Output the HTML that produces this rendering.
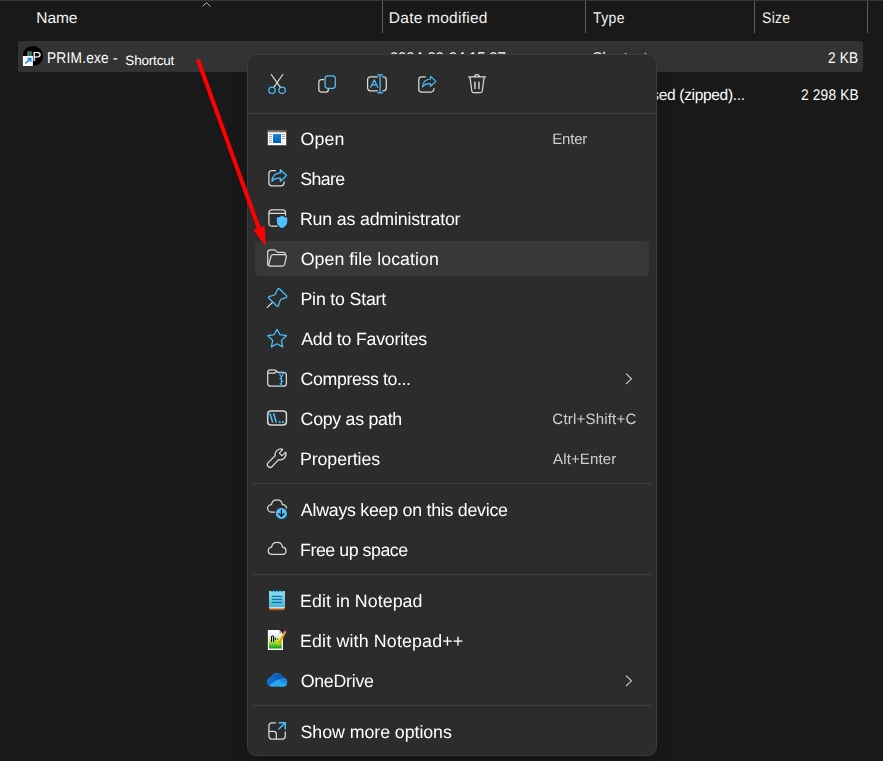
<!DOCTYPE html>
<html lang="en">
<head>
<meta charset="utf-8">
<title>Context menu</title>
<style>
html,body{margin:0;padding:0;}
body{width:883px;height:761px;overflow:hidden;background:#191919;position:relative;
  font-family:"Liberation Sans",sans-serif;color:#fff;text-rendering:geometricPrecision;}
.abs{position:absolute;}
.topline{left:0;top:0;width:883px;height:1px;background:#383838;}
.hdr{font-size:15.5px;line-height:18px;color:#f2f2f2;white-space:nowrap;}
.vsep{top:1px;width:1px;height:32px;background:#5e5e5e;}
.row1{left:18px;top:41px;width:845px;height:30.5px;background:#333333;border-radius:3px;}
.cell{font-size:15.5px;line-height:18px;color:#fff;white-space:nowrap;}
.s13{font-size:13.5px;}
.menu{left:247px;top:54px;width:408px;height:700px;background:#2c2c2c;border:1px solid #3c3c3c;border-radius:9px;
  box-shadow:0 12px 22px -2px rgba(0,0,0,.24);}
.msep{left:252px;width:399px;height:1px;background:#404040;}
.hl{left:255px;top:241px;width:394px;height:35px;background:#383838;border-radius:5px;}
.it{font-size:17.8px;line-height:20px;color:#fff;white-space:nowrap;}
.sc{font-size:15px;line-height:18px;color:#cfcfcf;white-space:nowrap;}
svg{position:absolute;overflow:visible;}
</style>
</head>
<body>
<div class="abs topline"></div>

<!-- header -->
<div class="abs vsep" style="left:382px"></div>
<div class="abs vsep" style="left:585px"></div>
<div class="abs vsep" style="left:754px"></div>
<div class="abs vsep" style="left:867px"></div>
<svg style="left:200px;top:0px" width="14" height="8" viewBox="0 0 14 8"><path d="M2.5 6.6 L6.5 2.6 L10.5 6.6" fill="none" stroke="#b4b4b4" stroke-width="1"/></svg>

<!-- rows -->
<div class="abs row1"></div>
<div class="abs hdr" style="left:36.31px;top:10.10px;letter-spacing:-0.089px">Name</div>
<div class="abs hdr" style="left:388.84px;top:10.10px;letter-spacing:0.244px">Date modified</div>
<div class="abs hdr" style="left:592.85px;top:10.10px;letter-spacing:0.462px;transform:scaleX(0.900);transform-origin:0 0">Type</div>
<div class="abs hdr" style="left:761.92px;top:10.10px;letter-spacing:0.361px;transform:scaleX(0.900);transform-origin:0 0">Size</div>
<div class="abs cell" style="left:47.48px;top:50.00px;letter-spacing:0.242px;transform:scaleX(0.885);transform-origin:0 0">PRIM.exe -</div>
<div class="abs cell s13" style="left:125.33px;top:51.70px;letter-spacing:-0.185px">Shortcut</div>
<div class="abs cell" style="left:389.63px;top:50.00px;letter-spacing:-0.406px">2024-09-24 15:27</div>
<div class="abs cell" style="left:592.29px;top:50.00px;letter-spacing:-0.367px">Shortcut</div>
<div class="abs cell" style="left:827.93px;top:50.00px;letter-spacing:0.142px;transform:scaleX(0.885);transform-origin:0 0">2 KB</div>
<div class="abs cell" style="left:590.74px;top:86.50px;letter-spacing:-0.325px">Compressed (zipped)...</div>
<div class="abs cell" style="left:800.61px;top:86.50px;letter-spacing:0.209px;transform:scaleX(0.885);transform-origin:0 0">2 298 KB</div>

<!-- file icon -->
<svg style="left:0;top:0" width="60" height="80" viewBox="0 0 60 80">
  <circle cx="32.9" cy="56" r="10.1" fill="#000"/>
  <rect x="27.2" y="51.2" width="1" height="4.8" fill="#50606c"/><rect x="28.2" y="51.2" width="1" height="4.8" fill="#7e9cb0"/><rect x="29.2" y="51.2" width="0.8" height="4.8" fill="#4a5660"/>
  <rect x="30" y="51.2" width="1" height="4.8" fill="#3f9a34"/><rect x="31" y="51.2" width="1" height="4.8" fill="#2a6a24"/>
  <text x="32.4" y="60.5" font-family="Liberation Sans, sans-serif" font-size="13" fill="#fff">P</text>
  <rect x="22.9" y="56" width="10" height="10" fill="#fbfcff"/>
  <path d="M25.4 63.5 L30.2 58.9 M27.4 58.5 H30.8 V61.8" fill="none" stroke="#1a86e0" stroke-width="1.5"/>
</svg>

<!-- menu -->
<div class="abs menu"></div>
<div class="abs msep" style="top:113px;left:248px;width:408px"></div>
<div class="abs msep" style="top:483px"></div>
<div class="abs msep" style="top:574px"></div>
<div class="abs msep" style="top:705px"></div>
<div class="abs hl"></div>
<div class="abs" style="left:0;top:0;width:883px;height:761px;will-change:transform">
<div class="abs it" style="left:300.60px;top:129.00px;letter-spacing:0.078px">Open</div>
<div class="abs it" style="left:300.37px;top:169.00px;letter-spacing:-0.688px">Share</div>
<div class="abs it" style="left:299.92px;top:209.00px;letter-spacing:-0.180px">Run as administrator</div>
<div class="abs it" style="left:300.70px;top:249.00px;letter-spacing:0.045px">Open file location</div>
<div class="abs it" style="left:300.46px;top:289.00px;letter-spacing:-0.194px">Pin to Start</div>
<div class="abs it" style="left:301.16px;top:328.70px;letter-spacing:-0.228px">Add to Favorites</div>
<div class="abs it" style="left:300.58px;top:368.70px;letter-spacing:-0.404px">Compress to...</div>
<div class="abs it" style="left:300.58px;top:408.60px;letter-spacing:-0.284px">Copy as path</div>
<div class="abs it" style="left:300.06px;top:448.60px;letter-spacing:-0.116px">Properties</div>
<div class="abs it" style="left:300.86px;top:499.70px;letter-spacing:-0.255px">Always keep on this device</div>
<div class="abs it" style="left:300.06px;top:540.00px;letter-spacing:-0.463px">Free up space</div>
<div class="abs it" style="left:300.06px;top:590.80px;letter-spacing:0.057px">Edit in Notepad</div>
<div class="abs it" style="left:300.06px;top:630.80px;letter-spacing:0.164px">Edit with Notepad++</div>
<div class="abs it" style="left:300.68px;top:670.80px;letter-spacing:-0.269px">OneDrive</div>
<div class="abs it" style="left:300.55px;top:721.60px;letter-spacing:-0.057px">Show more options</div>
<div class="abs sc" style="left:552.30px;top:131.00px;letter-spacing:-0.210px">Enter</div>
<div class="abs sc" style="left:552.35px;top:410.60px;letter-spacing:0.204px">Ctrl+Shift+C</div>
<div class="abs sc" style="left:553.07px;top:450.70px;letter-spacing:0.126px">Alt+Enter</div>
</div>




<!-- icons -->
<svg style="left:0;top:0" width="883" height="761" viewBox="0 0 883 761" fill="none" stroke-linecap="round" stroke-linejoin="round">
<defs>
  <linearGradient id="gnp" x1="0" y1="0" x2="0" y2="1"><stop offset="0" stop-color="#8fdcf6"/><stop offset="1" stop-color="#45b4da"/></linearGradient>
  <linearGradient id="gnpp" x1="0" y1="0" x2="0" y2="1"><stop offset="0" stop-color="#ffffff"/><stop offset=".3" stop-color="#dcecf4"/><stop offset=".5" stop-color="#d0f048"/><stop offset=".8" stop-color="#58c828"/><stop offset="1" stop-color="#109018"/></linearGradient>
  <linearGradient id="gop" x1="0" y1="0" x2="0" y2="1"><stop offset="0" stop-color="#1c86dc"/><stop offset="1" stop-color="#0060b8"/></linearGradient>
</defs>
<g stroke="#d9d9d9" stroke-width="1.25">
  <!-- cut -->
  <path d="M271.3 74.5 L280.2 87.2 M282.8 74.5 L274 87.2"/>
  <g stroke="#4cc2ff"><circle cx="272" cy="90.2" r="3.2"/><circle cx="282.1" cy="90.2" r="3.2"/></g>
  <!-- copy -->
  <path d="M324 79.5 H321.6 A2.8 2.8 0 0 0 318.8 82.3 V89.2 A2.8 2.8 0 0 0 321.6 92 H325.7 A2.8 2.8 0 0 0 328.5 89.4"/>
  <rect x="325.1" y="75.8" width="10.2" height="12.5" rx="2.8" stroke="#4cc2ff"/>
  <!-- rename -->
  <path d="M377.4 76.9 H370.6 A3 3 0 0 0 367.6 79.9 V87.8 A3 3 0 0 0 370.6 90.8 H377.4 M382.9 76.9 H383.3 A3 3 0 0 1 386.3 79.9 V87.8 A3 3 0 0 1 383.3 90.8 H382.9"/>
  <g stroke="#4cc2ff"><path d="M380.1 74.8 V92.9 M377.7 74.8 H382.5 M377.7 92.9 H382.5"/><path d="M370.7 87.3 L374.25 79.9 L377.8 87.3 M371.9 84.9 H376.6" stroke-width="1.25"/></g>
  <!-- share (top) -->
  <path d="M425.2 76.9 H421.6 A2.8 2.8 0 0 0 418.8 79.7 V89.2 A2.8 2.8 0 0 0 421.6 92 H431.1 A2.8 2.8 0 0 0 433.9 89.2 V88.5"/>
  <path d="M430.5 76.4 L435.9 81.4 L430.5 86.3 V83.7 C426.9 83.5 424.3 84.6 422.5 86.9 C422.9 82.2 425.9 79.3 430.5 79 Z" stroke="#4cc2ff" stroke-width="1.15"/>
  <!-- delete -->
  <path d="M468.6 76.9 H485.4 M474.6 76.7 A2.4 2.1 0 0 1 479.4 76.7 M470 77.3 L471.8 91 A2 2 0 0 0 473.8 92.7 H480.3 A2 2 0 0 0 482.3 91 L484.1 77.3"/>
  <path d="M474.95 82.1 V88.4 M478.95 82.1 V88.4" stroke-width="1.45"/>

  <!-- share (item) -->
  <path d="M275.5 170.6 H271.9 A3 3 0 0 0 268.9 173.6 V182.8 A3 3 0 0 0 271.9 185.8 H281.1 A3 3 0 0 0 284.1 182.8 V181.8"/>
  <path d="M280.3 169.7 L286.6 175.5 L280.3 181.3 V178.2 C276.5 178 273.8 179 271.9 181.4 C272.3 176.4 275.5 173.2 280.3 172.9 Z" stroke="#4cc2ff" stroke-width="1.25"/>
  <!-- run as admin -->
  <path d="M277 226.2 H271.9 A3 3 0 0 1 268.9 223.2 V212.8 A3 3 0 0 1 271.9 209.8 H282.5 A3 3 0 0 1 285.5 212.8 V215.2 M268.9 213.4 H285.5"/>
  <path d="M282 215.6 C283.4 216.9 285.2 217.5 287.3 217.7 V221.6 C287.3 224.8 285.2 227 282 228.2 C278.8 227 276.8 224.8 276.8 221.6 V217.7 C278.8 217.5 280.6 216.9 282 215.6 Z" fill="#4cc2ff" stroke="none"/>
  <!-- open file location -->
  <path d="M285.4 254.6 V254.2 A1.8 1.8 0 0 0 283.6 252.4 H277.6 L275.4 250.4 A2.2 2.2 0 0 0 274 249.8 H270.4 A2.7 2.7 0 0 0 267.7 252.5 V263.6 A2.6 2.6 0 0 0 270.3 266.2"/>
  <path d="M270.3 266.2 H282.2 A2.6 2.6 0 0 0 284.7 264.2 L286.3 256.8 A1.7 1.7 0 0 0 284.6 254.7 H273.2 A2.4 2.4 0 0 0 270.9 256.5 L268.6 265"/>
  <!-- pin -->
  <path d="M272.5 302.4 L267.3 307.4" stroke="#e4e4e4"/>
  <path d="M279.6 289 L286.4 295.6 A1.3 1.3 0 0 1 285.9 297.7 L281.4 299.2 A2 2 0 0 0 280.1 300.6 L278.4 305.9 A0.8 0.8 0 0 1 277.1 306.2 L268.7 298 A0.8 0.8 0 0 1 269 296.7 L274.2 295 A2 2 0 0 0 275.5 293.8 L277.4 289.4 A1.3 1.3 0 0 1 279.6 289 Z" stroke="#4cc2ff"/>
  <!-- star -->
  <path d="M277.05 329.3 L279.9 334.7 L286.4 335.7 L281.4 340.4 L282.7 346.9 L277.05 343.8 L271.4 346.9 L272.7 340.4 L267.7 335.7 L274.2 334.7 Z" stroke="#4cc2ff"/>
  <!-- compress -->
  <path d="M267.7 373.2 H273.6 A2.4 2.4 0 0 0 275.3 372.5 L276.8 371 M277.6 372.3 H283.4 A3 3 0 0 1 286.4 375.3 V383.2 A3 3 0 0 1 283.4 386.2 H270.7 A3 3 0 0 1 267.7 383.2 V372.6 A2.8 2.8 0 0 1 270.5 369.8 H273.9 A2.4 2.4 0 0 1 275.5 370.4 L277.6 372.3"/>
  <g stroke="#4cc2ff" stroke-width="1.1"><path d="M281.4 376.2 V386.4"/><ellipse cx="281.4" cy="374.2" rx="1.5" ry="2.1"/><path d="M281.4 378.5 H280.1 M281.4 381.2 H282.7 M281.4 383.8 H280.1" stroke-width="1.3"/></g>
  <!-- copy as path -->
  <rect x="267.7" y="411" width="18.7" height="13.9" rx="3.2" stroke-width="1.5"/>
  <path d="M269.9 413.2 L272.7 422.5 M273.5 413.2 L276.3 422.5" stroke="#4cc2ff" stroke-width="1.5" stroke-linecap="butt"/>
  <rect x="278.8" y="421.1" width="1.8" height="1.8" fill="#4cc2ff" stroke="none"/><rect x="282.1" y="421.1" width="1.8" height="1.8" fill="#4cc2ff" stroke="none"/>
  <!-- properties -->
  <path d="M282.7 449.3 L279.7 452.6 A0.7 0.7 0 0 0 279.7 453.5 L281.6 455.4 A0.7 0.7 0 0 0 282.5 455.4 L285.7 452.2 A5.8 5.8 0 0 1 278.6 459.6 L272.1 466.5 A2.75 2.75 0 0 1 268.2 462.6 L275.1 455.7 A5.8 5.8 0 0 1 282.7 449.3 Z"/>
  <!-- always keep -->
  <path d="M274.6 512.1 H271.2 A3.7 3.7 0 0 1 271.5 504.7 A5.5 5.5 0 0 1 282.4 504.7 A3.7 3.7 0 0 1 286.6 508"/>
  <circle cx="281.4" cy="513.4" r="5.5" fill="#4cc2ff" stroke="none"/>
  <path d="M281.4 510.4 V516.2 M278.8 513.7 L281.4 516.3 L284 513.7" stroke="#000" stroke-width="1.2"/>
  <!-- free up -->
  <path d="M271.2 554.4 H283.1 A3.7 3.7 0 0 0 282.5 547.1 A5.5 5.5 0 0 0 271.6 547.1 A3.7 3.7 0 0 0 271.2 554.4 Z"/>
  <!-- show more options -->
  <path d="M275.5 722.8 H271.9 A3 3 0 0 0 268.9 725.8 V736 A3 3 0 0 0 271.9 739 H282.3 A3 3 0 0 0 285.3 736 V731.8 M268.9 731.4 H273.6 A2.7 2.7 0 0 1 276.3 734.1 V739"/>
  <path d="M278.6 729.3 L285.3 722.8 M278.6 722.8 H285.3 V729.5" stroke="#4cc2ff" stroke-width="1.4" stroke-linecap="butt" stroke-linejoin="miter"/>
  <!-- chevrons -->
  <g stroke="#cecece" stroke-width="1.05" stroke-linecap="butt" stroke-linejoin="miter"><path d="M626 373.6 L631.5 378.8 L626 384"/><path d="M626 675.6 L631.5 680.8 L626 686"/></g>
</g>

<!-- open (exe) icon -->
<g stroke="none">
  <rect x="267" y="130" width="20" height="16" fill="#5c5955"/>
  <rect x="268" y="130.5" width="18" height="2" fill="#7d7975"/>
  <rect x="280.6" y="131" width="1" height="1" fill="#444"/><rect x="282.8" y="131" width="1" height="1" fill="#444"/><rect x="285" y="131" width="1" height="1" fill="#444"/>
  <rect x="268" y="132.3" width="18" height="12.7" fill="#ffffff"/>
  <rect x="273" y="134" width="8" height="9" fill="url(#gop)"/>
  <g fill="#a3a3a3"><rect x="269" y="134" width="3" height="1"/><rect x="269" y="136" width="3" height="1"/><rect x="269" y="138" width="3" height="1"/><rect x="269" y="140" width="3" height="1"/><rect x="269" y="142" width="3" height="1"/>
  <rect x="282" y="134" width="3" height="1"/><rect x="282" y="136" width="3" height="1"/><rect x="282" y="138" width="3" height="1"/></g>
  <rect x="282" y="140" width="3" height="3.5" fill="#f4f4f4"/>
</g>

<!-- notepad -->
<g stroke="none">
  <rect x="269.1" y="591" width="15.6" height="19.2" rx="1" fill="#b85c10"/>
  <rect x="269.1" y="591" width="15.6" height="17.6" rx="0.8" fill="#eef4f6"/>
  <rect x="269.1" y="591" width="15.6" height="16.2" rx="0.8" fill="url(#gnp)"/>
  <g fill="#056f98"><rect x="272" y="595.8" width="10" height="1.1"/><rect x="272" y="598.8" width="10" height="1.1"/><rect x="272" y="601.8" width="10" height="1.1"/>
  <path d="M272.2 589.8 l1 1.3 l-1 1.3 l-1 -1.3z M275.4 589.8 l1 1.3 l-1 1.3 l-1 -1.3z M278.5 589.8 l1 1.3 l-1 1.3 l-1 -1.3z M281.7 589.8 l1 1.3 l-1 1.3 l-1 -1.3z"/></g>
</g>

<!-- notepad++ -->
<g stroke="none">
  <path d="M267.9 630.1 H279.2 L283 634 V649.9 H267.9 Z" fill="#fbfbfb"/>
  <path d="M269 631.3 H278.8 L281.8 634.5 V648.6 H269 Z" fill="url(#gnpp)"/>
  <path d="M279.2 630.1 L283 634 H279.2 Z" fill="#c8c8c8"/>
  <path d="M271 642.1 V636.2 L272.5 635.2 L274.1 636.2 V642.1 Z" fill="#0c0c0c"/><rect x="272.15" y="636.4" width="0.85" height="5.7" fill="#f4f4f4"/>
  <ellipse cx="275.4" cy="638.9" rx="0.6" ry="1.3" fill="#1a1a1a"/><ellipse cx="277.7" cy="638.9" rx="0.55" ry="1" fill="#555"/>
  <path d="M284.8 632.6 L278.6 644.4" stroke="#f0a400" stroke-width="2.2" stroke-linecap="butt"/>
  <path d="M279.3 643.3 L277.9 645.6 L277.7 643.6 Z" fill="#f0c8a8"/>
  <path d="M285.8 630.6 L284.9 632.4" stroke="#d83030" stroke-width="2.2" stroke-linecap="butt"/>
  <path d="M285.2 631.8 L284.7 632.8" stroke="#b8c4d0" stroke-width="2.2" stroke-linecap="butt"/>
</g>

<!-- onedrive -->
<g stroke="none">
  <path d="M271.6 686.4 A4.6 4.6 0 0 1 270.9 677.3 A6.3 6.3 0 0 1 282.4 676.6 L283.3 677.7 A4.6 4.6 0 0 1 287.2 682.4 A4.1 4.1 0 0 1 283.2 686.4 Z" fill="#1e98e6"/>
  <path d="M271.6 686.4 A4.6 4.6 0 0 1 270.9 677.3 A6.3 6.3 0 0 1 282.4 676.6 L277 681 Z" fill="#0f6ccc"/>
  <path d="M272.6 677.2 A6.3 6.3 0 0 1 283.6 677.6 L279.5 680.8 Z" fill="#0a5cb8"/>
  <path d="M278.2 679.8 L283.3 677.7 A4.6 4.6 0 0 1 287.2 682.4 A4.1 4.1 0 0 1 283.2 686.4 H279 Z" fill="#1888e4"/>
  <path d="M269.3 684.9 L277.9 679.6 L286.6 684.5 A4.1 4.1 0 0 1 283.2 686.4 H271.6 A4.6 4.6 0 0 1 269.3 684.9 Z" fill="#28a8ea"/>
</g>
</svg>

<!-- red arrow -->
<svg style="left:0;top:0" width="883" height="761" viewBox="0 0 883 761">
  <line x1="198.4" y1="61" x2="259.5" y2="230" stroke="#ff0000" stroke-width="4" stroke-linecap="round"/>
  <polygon points="253.1,229.7 264.7,226 265.8,246.3" fill="#ff0000"/>
</svg>
</body>
</html>
